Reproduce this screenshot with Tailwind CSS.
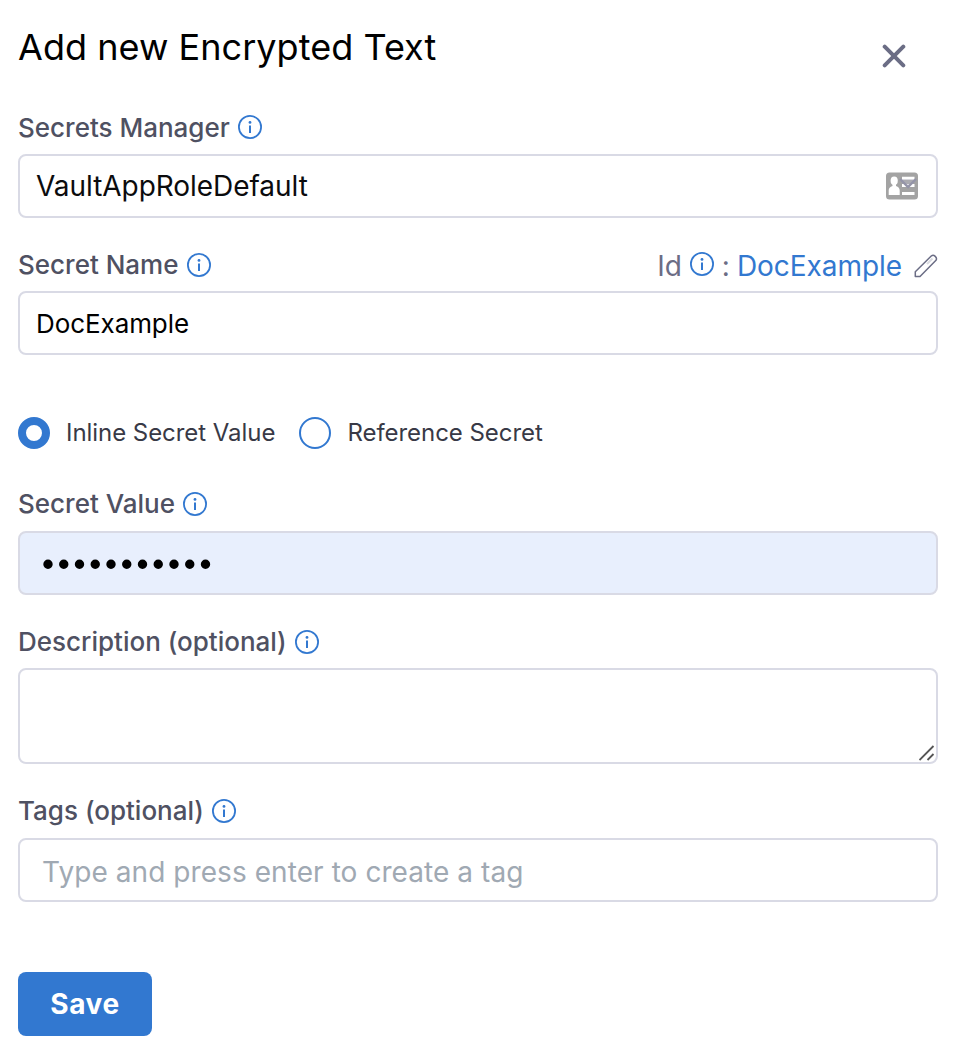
<!DOCTYPE html>
<html lang="en">
<head>
<meta charset="utf-8">
<title>Add new Encrypted Text</title>
<script src="https://cdn.jsdelivr.net/npm/@tailwindcss/browser@4"></script>
</head>
<body class="bg-white font-['Inter',sans-serif] text-black">
<svg class="hidden">
  <symbol id="info" viewBox="0 0 24 24"><circle cx="12" cy="12" r="11.1" fill="none" stroke="#3278d0" stroke-width="1.8"/><circle cx="12" cy="7.4" r="1.4" fill="#3278d0"/><path d="M12 10.6V18" stroke="#3278d0" stroke-width="2"/></symbol>
</svg>
<main class="flex h-[1061px] w-[956px] flex-col px-[18px]">
  <header class="flex h-[107px] justify-between">
    <h1 class="mt-[25px] text-[36px] leading-[44px] tracking-[0.04px] whitespace-nowrap">Add new Encrypted Text</h1>
    <svg class="mt-11 mr-8 size-6" viewBox="0 0 24 24" fill="none" stroke="#6b6d85" stroke-width="4" stroke-linecap="round"><path d="M2.7 2.7l18.600 18.600M21.300 2.700L2.700 21.300"/></svg>
  </header>

  <label class="flex h-10 items-center gap-2 text-[26px] font-medium text-[#4f5162]"><span>Secrets Manager</span><svg class="size-6"><use href="#info"/></svg></label>
  <div class="mt-[7px] flex h-16 items-center justify-between rounded-lg border-2 border-[#d9dae5] pr-[18px] pl-4 text-[28px] text-[#0b0b0d]">
    <span class="tracking-[-0.05px]">VaultAppRoleDefault</span>
    <svg class="h-7 w-8" viewBox="0 0 32 28"><rect y=".5" width="32" height="27" rx="3.5" fill="#a3a3a3"/><ellipse cx="8.2" cy="8.8" rx="3.6" ry="4.3" fill="#fff"/><path d="M6.500 11h3.500v3c2.500 .7 3.700 2.200 3.700 4.500v4.500h-11v-4.500c0-2.300 1.300-3.800 3.800-4.500z" fill="#fff"/><path d="M16 6.300h12.500M16 13.500h12.500M16 21.500h12.500" stroke="#fff" stroke-width="3"/><path d="M14 7l8 8 8-8" fill="#b8b8c8" fill-opacity=".35" stroke="#9494a8" stroke-width="2.400"/></svg>
  </div>

  <div class="mt-[26px] flex h-10 items-center justify-between">
    <label class="flex items-center gap-[9px] text-[26px] font-medium text-[#4f5162]"><span>Secret Name</span><svg class="mt-0.5 size-6"><use href="#info"/></svg></label>
    <div class="flex items-center text-[28px] text-[#6b6d85]">
      <span class="mt-1">Id</span><svg class="mr-2 ml-2 size-6"><use href="#info"/></svg><span class="mt-1 mr-[7px]">:</span><span class="mt-1 tracking-[-0.05px] text-[#3278d0]">DocExample</span>
      <svg class="mt-1 ml-3 size-6" viewBox="0 0 24 24" fill="none" stroke="#6b6d85" stroke-width="1.500" stroke-linejoin="round"><path d="M1.300 22.500v-4.800L17.500 1.800c2.300-1.800 6.200 1.800 4.500 4.500L6 22.500z"/><path d="M13 10l5.500-5.500" stroke="#d9dae0" stroke-width="2"/></svg>
    </div>
  </div>
  <div class="mt-[7px] flex h-16 items-center rounded-lg border-2 border-[#d9dae5] px-4 text-[26px] tracking-[-0.08px]"><span>DocExample</span></div>

  <div class="mt-[62px] flex h-8 items-center text-[24px] text-[#383946]">
    <span class="mr-4 size-8 rounded-full border-8 border-[#3278d0] bg-white"></span><span class="tracking-[-0.05px]">Inline Secret Value</span>
    <span class="mr-4 ml-6 size-8 rounded-full border-2 border-[#3278d0]"></span><span class="tracking-[-0.04px]">Reference Secret</span>
  </div>

  <label class="mt-[34px] flex h-10 items-center gap-2 text-[26px] font-medium text-[#4f5162]"><span>Secret Value</span><svg class="mt-0.5 size-6"><use href="#info"/></svg></label>
  <div class="mt-2 flex h-16 items-center rounded-lg border-2 border-[#d9dae5] bg-[#e8effd] px-[22px]">
    <svg class="h-3 w-[172px]" viewBox="0 0 172 12"><path d="M6 7.200h158" stroke="#000" stroke-width="9.400" stroke-linecap="round" stroke-dasharray="0 15.750"/></svg>
  </div>

  <label class="mt-[26px] flex h-10 items-center gap-2 text-[26px] font-medium text-[#4f5162]"><span>Description (optional)</span><svg class="mt-0.5 size-6"><use href="#info"/></svg></label>
  <div class="mt-[7px] flex h-24 items-end justify-end rounded-lg border-2 border-[#d9dae5]">
    <svg class="mr-px mb-px size-4" viewBox="0 0 16 16" stroke="#555" stroke-width="1.800"><path d="M.5 15L14.500 1M8.500 15l6-6"/></svg>
  </div>

  <label class="mt-[26px] flex h-10 items-center gap-2 text-[26px] font-medium text-[#4f5162]"><span>Tags (optional)</span><svg class="mt-0.5 size-6"><use href="#info"/></svg></label>
  <div class="mt-2 flex h-16 items-center rounded-lg border-2 border-[#d9dae5] px-[22px] text-[28px] text-[#a0a9b3]"><span class="mt-1 tracking-[0.07px]">Type and press enter to create a tag</span></div>

  <button class="mt-[70px] h-16 w-[134px] rounded-lg bg-[#3278d0] text-[28px] font-bold tracking-[0.6px] text-white"><span>Save</span></button>
</main>
</body>
</html>
